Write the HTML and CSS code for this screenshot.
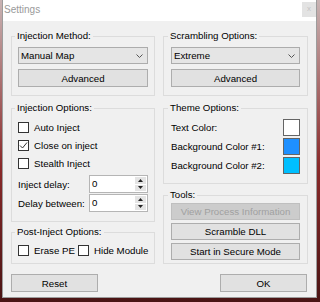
FILE: index.html
```html
<!DOCTYPE html>
<html lang="en">
<head>
    <meta charset="UTF-8">
    <title>Settings</title>
    <link rel="stylesheet" href="styles.css">
</head>
<body>
    <div class="window">
        <div class="titlebar">
            <span class="title">Settings</span>
            <span class="close">x</span>
        </div>
        <div class="content">
            <div class="col">
                <fieldset class="group g-method">
                    <legend>Injection Method:</legend>
                    <div class="select">
                        <span>Manual Map</span>
                        <svg class="chevron" width="7" height="4" viewBox="0 0 7 4"><polyline points="0.5,0.5 3.5,3.5 6.5,0.5" fill="none" stroke="#555" stroke-width="1"/></svg>
                    </div>
                    <button class="btn first">Advanced</button>
                </fieldset>

                <fieldset class="group g-inject">
                    <legend>Injection Options:</legend>
                    <label class="check first"><span class="box"></span>Auto Inject</label>
                    <label class="check"><span class="box"><svg width="9" height="9" viewBox="0 0 9 9"><polyline points="1,4.5 3.5,7 8,1.5" fill="none" stroke="#333" stroke-width="1"/></svg></span>Close on inject</label>
                    <label class="check"><span class="box"></span>Stealth Inject</label>
                    <div class="field first">
                        <span class="label">Inject delay:</span>
                        <div class="spin">
                            <span class="val">0</span>
                            <div class="arrows">
                                <span><svg width="5" height="3" viewBox="0 0 5 3"><polygon points="2.5,0 5,3 0,3" fill="#222"/></svg></span>
                                <span><svg width="5" height="3" viewBox="0 0 5 3"><polygon points="0,0 5,0 2.5,3" fill="#222"/></svg></span>
                            </div>
                        </div>
                    </div>
                    <div class="field">
                        <span class="label">Delay between:</span>
                        <div class="spin">
                            <span class="val">0</span>
                            <div class="arrows">
                                <span><svg width="5" height="3" viewBox="0 0 5 3"><polygon points="2.5,0 5,3 0,3" fill="#222"/></svg></span>
                                <span><svg width="5" height="3" viewBox="0 0 5 3"><polygon points="0,0 5,0 2.5,3" fill="#222"/></svg></span>
                            </div>
                        </div>
                    </div>
                </fieldset>

                <fieldset class="group g-post">
                    <legend>Post-Inject Options:</legend>
                    <div class="inline">
                        <label class="check wide"><span class="box"></span>Erase PE</label>
                        <label class="check"><span class="box"></span>Hide Module</label>
                    </div>
                </fieldset>

                <button class="btn dialog">Reset</button>
            </div>

            <div class="col right">
                <fieldset class="group g-method">
                    <legend>Scrambling Options:</legend>
                    <div class="select">
                        <span>Extreme</span>
                        <svg class="chevron" width="7" height="4" viewBox="0 0 7 4"><polyline points="0.5,0.5 3.5,3.5 6.5,0.5" fill="none" stroke="#555" stroke-width="1"/></svg>
                    </div>
                    <button class="btn first">Advanced</button>
                </fieldset>

                <fieldset class="group g-theme">
                    <legend>Theme Options:</legend>
                    <div class="color-row first"><span>Text Color:</span><span class="swatch" style="background: #ffffff;"></span></div>
                    <div class="color-row"><span>Background Color #1:</span><span class="swatch" style="background: #1e90ff;"></span></div>
                    <div class="color-row"><span>Background Color #2:</span><span class="swatch" style="background: #00bfff;"></span></div>
                </fieldset>

                <fieldset class="group g-tools">
                    <legend>Tools:</legend>
                    <button class="btn tool disabled">View Process Information</button>
                    <button class="btn tool">Scramble DLL</button>
                    <button class="btn tool">Start in Secure Mode</button>
                </fieldset>

                <button class="btn dialog ok">OK</button>
            </div>
        </div>
    </div>
</body>
</html>
```

FILE: styles.css
```css
* {
    box-sizing: border-box;
}
body {
    margin: 0;
    height: 302px;
    overflow: hidden;
    background: linear-gradient(to bottom, #c9b4b4, #8a2a2a 55%, #4a1414);
    font-family: "Liberation Sans", Arial, sans-serif;
    font-size: 9.7px;
    color: #000;
}
.window {
    margin-left: 2px;
    width: 315px;
    height: 298px;
    background: #f0f0f0;
    border: 1px solid #9c9c9c;
    border-top: none;
}
.titlebar {
    height: 21px;
    background: #fff;
    display: flex;
    align-items: flex-start;
}
.title {
    padding: 4px 0 0 1px;
    font-size: 10px;
    line-height: 12px;
    color: #9a9a9a;
}
.close {
    margin: 2px 0 0 auto;
    width: 14px;
    height: 15px;
    background: #e3e3e3;
    color: #c4c4c4;
    font-size: 8px;
    line-height: 14px;
    text-align: center;
}
.content {
    display: grid;
    grid-template-columns: 144px 145px;
    column-gap: 8px;
    padding: 8px 8px 0;
}
.col {
    display: flex;
    flex-direction: column;
}
.group {
    margin: 0;
    padding: 0 6px;
    min-width: 0;
    border: 1px solid #dcdcdc;
    display: flex;
    flex-direction: column;
}
.right .group {
    padding: 0 7px;
}
legend {
    padding: 0 2px;
    margin-left: -3px;
    line-height: 14px;
}
.g-method {
    height: 67px;
}
.g-inject {
    height: 121px;
    margin-top: 5px;
}
.g-post {
    height: 39px;
    margin-top: 3px;
}
.g-theme {
    height: 83px;
    margin-top: 5px;
}
.g-tools {
    height: 76px;
    margin-top: 4px;
}
.select {
    margin-top: 4px;
    height: 17px;
    border: 1px solid #acacac;
    background: #e5e5e5;
    display: flex;
    align-items: center;
    padding: 0 4px 0 2px;
}
.chevron {
    margin-left: auto;
}
.btn {
    width: 100%;
    height: 18px;
    margin: 0;
    padding: 0;
    border: 1px solid #adadad;
    background: #e1e1e1;
    font: inherit;
    color: #000;
}
.btn.first {
    margin-top: 5px;
}
.btn.tool {
    height: 17px;
    margin-top: 3px;
}
.btn.tool.disabled {
    margin-top: 1px;
    background: #cccccc;
    border-color: #bfbfbf;
    color: #a0a0a0;
}
.btn.dialog {
    width: 87px;
    margin-top: 10px;
}
.btn.ok {
    align-self: flex-end;
    margin-right: 1px;
}
.check {
    height: 18px;
    display: flex;
    align-items: center;
    white-space: nowrap;
    flex-shrink: 0;
}
.check.first {
    margin-top: 3px;
}
.check.wide {
    width: 60px;
}
.box {
    width: 11px;
    height: 11px;
    margin-right: 5px;
    border: 1px solid #333;
    background: #fff;
    display: flex;
    align-items: center;
    justify-content: center;
    flex-shrink: 0;
}
.inline {
    margin-top: 2px;
    display: flex;
}
.field {
    height: 18px;
    margin-top: 1px;
    display: flex;
    align-items: center;
}
.field.first {
    margin-top: 3px;
}
.label {
    flex: 1;
}
.spin {
    width: 59px;
    height: 18px;
    border: 1px solid #b5b5b5;
    background: #fff;
    display: flex;
}
.val {
    flex: 1;
    padding-left: 2px;
    line-height: 16px;
}
.arrows {
    width: 13px;
    padding: 1px;
    display: flex;
    flex-direction: column;
    gap: 1px;
}
.arrows span {
    flex: 1;
    background: #e4e4e4;
    display: flex;
    align-items: center;
    justify-content: center;
}
.color-row {
    height: 18px;
    margin-top: 1px;
    display: flex;
    align-items: center;
    justify-content: space-between;
}
.color-row.first {
    margin-top: 3px;
}
.swatch {
    width: 17px;
    height: 17px;
    border: 1px solid #646464;
}
```
